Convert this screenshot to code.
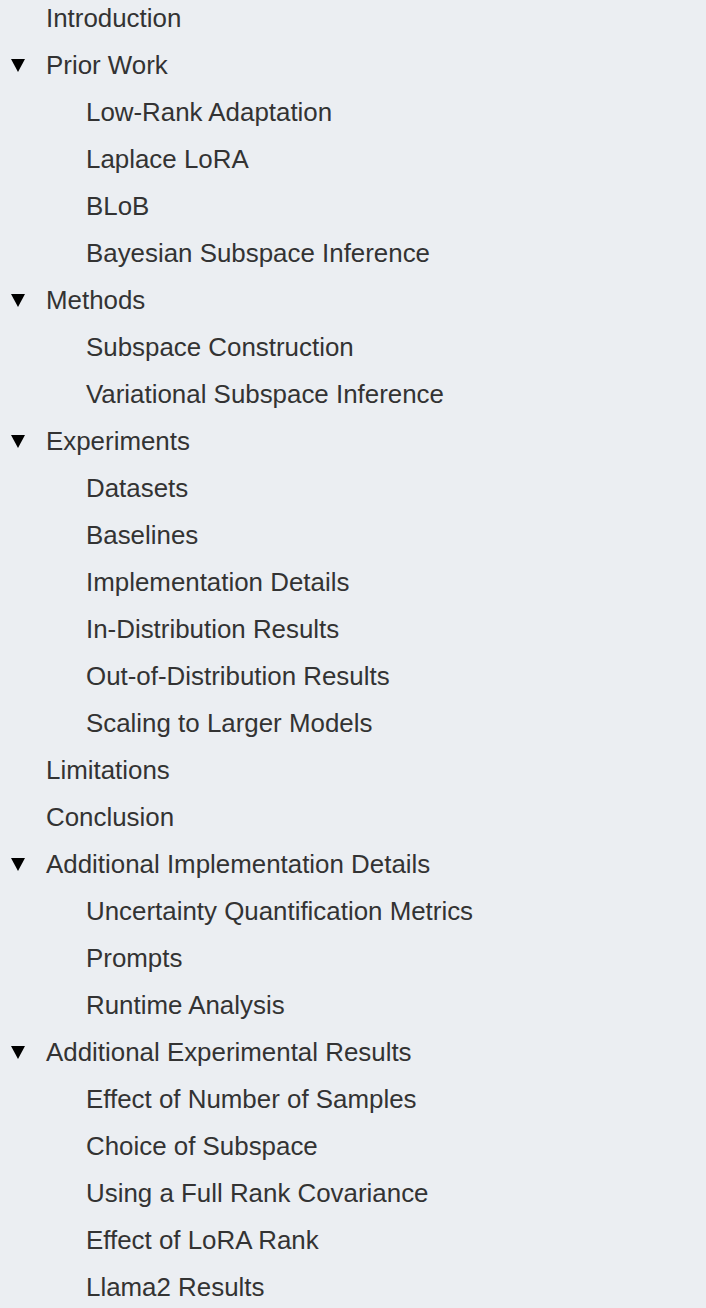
import React from 'react';

type Item = { title: string; children?: string[] };

const toc: Item[] = [
  { title: 'Introduction' },
  {
    title: 'Prior Work',
    children: ['Low-Rank Adaptation', 'Laplace LoRA', 'BLoB', 'Bayesian Subspace Inference'],
  },
  { title: 'Methods', children: ['Subspace Construction', 'Variational Subspace Inference'] },
  {
    title: 'Experiments',
    children: [
      'Datasets',
      'Baselines',
      'Implementation Details',
      'In-Distribution Results',
      'Out-of-Distribution Results',
      'Scaling to Larger Models',
    ],
  },
  { title: 'Limitations' },
  { title: 'Conclusion' },
  {
    title: 'Additional Implementation Details',
    children: ['Uncertainty Quantification Metrics', 'Prompts', 'Runtime Analysis'],
  },
  {
    title: 'Additional Experimental Results',
    children: [
      'Effect of Number of Samples',
      'Choice of Subspace',
      'Using a Full Rank Covariance',
      'Effect of LoRA Rank',
      'Llama2 Results',
    ],
  },
];

const Caret = () => (
  <svg className="absolute left-[11px] top-[17px]" width="14" height="13" viewBox="0 0 14 13">
    <polygon points="0,0 14,0 7,13" fill="#000" />
  </svg>
);

const App: React.FC = () => {
  return (
    <div
      className="min-h-[1308px] w-full overflow-hidden bg-[#ebeef2] text-[25.9px] leading-[47px] text-[#333333]"
      style={{ fontFamily: '"Liberation Sans", Arial, sans-serif' }}
    >
      <ul className="-mt-[5px]">
        {toc.map((item) => (
          <li key={item.title}>
            <div className="relative pl-[46px] whitespace-nowrap">
              {item.children && <Caret />}
              {item.title}
            </div>
            {item.children && (
              <ul>
                {item.children.map((c) => (
                  <li key={c} className="pl-[86px] whitespace-nowrap">
                    {c}
                  </li>
                ))}
              </ul>
            )}
          </li>
        ))}
      </ul>
    </div>
  );
};

export default App;
